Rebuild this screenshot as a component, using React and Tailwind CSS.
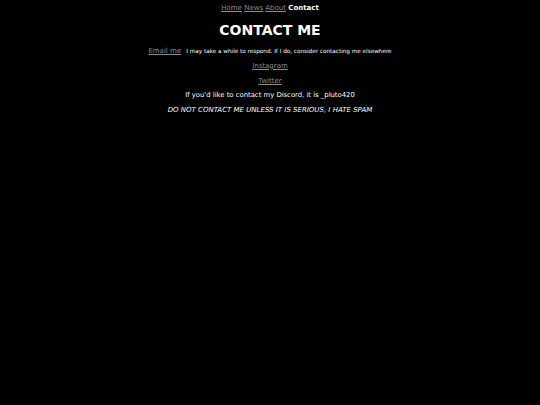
export default function App() {
  const font = { fontFamily: '"DejaVu Sans", Verdana, sans-serif' };
  return (
    <div className="min-h-[405px] w-full bg-black text-white text-center" style={font}>
      <nav className="pt-[3px] text-[7px] leading-[10px]">
        <a href="#" className="text-[#8a8a8a] underline">Home</a>{" "}
        <a href="#" className="text-[#8a8a8a] underline">News</a>{" "}
        <a href="#" className="text-[#8a8a8a] underline">About</a>{" "}
        <span className="font-bold">Contact</span>
      </nav>
      <h1 className="mt-[8px] text-[14px] leading-[18px] font-bold">CONTACT ME</h1>
      <p className="mt-[4px] leading-[10px]">
        <a href="#" className="text-[7px] text-[#8a8a8a] underline">Email me</a>{" "}
        <span className="text-[5.7px]">I may take a while to respond. If I do, consider contacting me elsewhere</span>
      </p>
      <p className="mt-[4.75px] text-[7px] leading-[10px]">
        <a href="#" className="text-[#8a8a8a] underline">Instagram</a>
      </p>
      <p className="mt-[4.75px] text-[7px] leading-[10px]">
        <a href="#" className="text-[#8a8a8a] underline">Twitter</a>
      </p>
      <p className="mt-[4.75px] text-[6.85px] leading-[10px]">If you'd like to contact my Discord, it is _pluto420</p>
      <p className="mt-[4.75px] text-[7px] leading-[10px] italic">DO NOT CONTACT ME UNLESS IT IS SERIOUS, I HATE SPAM</p>
    </div>
  );
}
